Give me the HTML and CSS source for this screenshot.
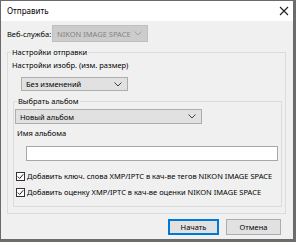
FILE: index.html
```html
<!DOCTYPE html>
<html lang="ru">
<head>
<meta charset="utf-8">
<title>Отправить</title>
<link rel="stylesheet" href="styles.css">
</head>
<body>
<div class="window">
  <div class="titlebar">
    <span class="title">Отправить</span>
    <svg class="close" width="10" height="10" viewBox="0 0 10 10"><path d="M1 1L9 9M9 1L1 9" stroke="#202020" stroke-width="1.1" fill="none"/></svg>
  </div>
  <div class="content">
    <div class="service-row">
      <span class="label">Веб-служба:</span>
      <div class="combo combo-disabled">
        <span>NIKON IMAGE SPACE</span>
        <svg class="chev" width="8" height="5" viewBox="0 0 8 5"><path d="M0.5 0.5L4 4L7.5 0.5" stroke="#a0a0a0" stroke-width="1" fill="none"/></svg>
      </div>
    </div>
    <div class="group outer">
      <span class="caption">Настройки отправки</span>
      <div class="label size-label">Настройки изобр. (изм. размер)</div>
      <div class="combo combo-size">
        <span>Без изменений</span>
        <svg class="chev" width="8" height="5" viewBox="0 0 8 5"><path d="M0.5 0.5L4 4L7.5 0.5" stroke="#404040" stroke-width="1" fill="none"/></svg>
      </div>
      <div class="group inner">
        <span class="caption">Выбрать альбом</span>
        <div class="combo combo-album">
          <span>Новый альбом</span>
          <svg class="chev" width="8" height="5" viewBox="0 0 8 5"><path d="M0.5 0.5L4 4L7.5 0.5" stroke="#404040" stroke-width="1" fill="none"/></svg>
        </div>
        <div class="label name-label">Имя альбома</div>
        <div class="textbox"></div>
        <div class="check-row first">
          <span class="checkbox"><svg width="7" height="7" viewBox="0 0 7 7"><path d="M0.8 3.6L2.7 5.5L6.3 1.2" stroke="#202020" stroke-width="1" fill="none"/></svg></span>
          <span class="label">Добавить ключ. слова XMP/IPTC в кач-ве тегов NIKON IMAGE SPACE</span>
        </div>
        <div class="check-row">
          <span class="checkbox"><svg width="7" height="7" viewBox="0 0 7 7"><path d="M0.8 3.6L2.7 5.5L6.3 1.2" stroke="#202020" stroke-width="1" fill="none"/></svg></span>
          <span class="label">Добавить оценку XMP/IPTC в кач-ве оценки NIKON IMAGE SPACE</span>
        </div>
      </div>
    </div>
    <div class="buttons">
      <div class="btn btn-default">Начать</div>
      <div class="btn">Отмена</div>
    </div>
  </div>
</div>
</body>
</html>
```
FILE: styles.css
```css
html, body {
  margin: 0;
  padding: 0;
}
body {
  width: 296px;
  height: 242px;
  background: #6f6b66;
  font-family: "Noto Sans", "Open Sans", sans-serif;
  font-size: 7.5px;
  color: #000;
  overflow: hidden;
}
.window {
  width: 292px;
  height: 238px;
  border: 1px solid #6a6a6a;
  background: #f0f0f0;
  display: flex;
  flex-direction: column;
}
.titlebar {
  height: 20px;
  flex-shrink: 0;
  background: #ffffff;
  display: flex;
  align-items: center;
  justify-content: space-between;
  padding: 0 4px 0 6px;
}
.title {
  font-size: 8px;
  line-height: 12px;
}
.close {
  display: block;
}
.content {
  padding: 4px 0 0 6px;
  display: flex;
  flex-direction: column;
}
.label {
  line-height: 12px;
  white-space: nowrap;
}
.service-row {
  display: flex;
  align-items: center;
  height: 17px;
}
.service-row .label {
  width: 45px;
  flex-shrink: 0;
}
.combo {
  box-sizing: border-box;
  display: flex;
  align-items: center;
  justify-content: space-between;
  padding: 0 5px 0 4px;
  border: 1px solid #adadad;
  background: #e1e1e1;
  line-height: 12px;
  white-space: nowrap;
  flex-shrink: 0;
}
.chev {
  display: block;
  flex-shrink: 0;
}
.combo-disabled {
  width: 96px;
  height: 17px;
  background: #cccccc;
  border-color: #bfbfbf;
  color: #838383;
}
.group {
  position: relative;
  box-sizing: border-box;
  border: 1px solid #dcdcdc;
  display: flex;
  flex-direction: column;
  align-items: flex-start;
  flex-shrink: 0;
}
.caption {
  position: absolute;
  top: -7px;
  left: 3px;
  padding: 0 1px;
  background: #f0f0f0;
  line-height: 12px;
  white-space: nowrap;
}
.outer {
  margin-top: 10px;
  width: 279px;
  height: 162px;
  padding: 6px 3px 0 4px;
}
.combo-size {
  margin: 6px 0 0 9px;
  width: 107px;
  height: 14px;
}
.inner {
  margin: 10px 0 0 1px;
  width: 269px;
  height: 106px;
  padding: 0 0 0 1px;
}
.combo-album {
  margin-top: 7px;
  width: 187px;
  height: 15px;
}
.name-label {
  margin: 3px 0 0 2px;
}
.textbox {
  box-sizing: border-box;
  margin: 7px 0 0 11px;
  width: 252px;
  height: 15px;
  background: #ffffff;
  border: 1px solid #a8a8a8;
  flex-shrink: 0;
}
.check-row {
  display: flex;
  align-items: center;
  gap: 2px;
  margin-top: 4px;
  margin-left: 1px;
}
.check-row.first {
  margin-top: 9px;
}
.checkbox {
  box-sizing: border-box;
  width: 9px;
  height: 9px;
  border: 1px solid #333333;
  background: #ffffff;
  display: flex;
  align-items: center;
  justify-content: center;
  flex-shrink: 0;
}
.checkbox svg {
  display: block;
}
.buttons {
  display: flex;
  justify-content: flex-end;
  gap: 7px;
  margin: 5px 12px 0 0;
}
.btn {
  box-sizing: border-box;
  height: 16px;
  width: 55px;
  border: 1px solid #adadad;
  background: #e1e1e1;
  display: flex;
  align-items: center;
  justify-content: center;
  line-height: 12px;
}
.btn-default {
  width: 51px;
  border: 2px solid #0078d7;
}
```
